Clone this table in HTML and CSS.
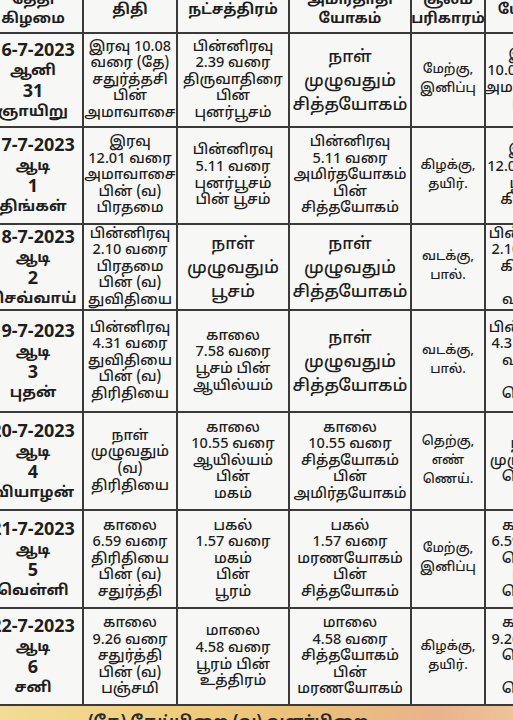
FILE: index.html
```html
<!DOCTYPE html>
<html lang="ta">
<head>
<meta charset="utf-8">
<link rel="stylesheet" href="styles.css">
</head>
<body>
<div class="page">
  <div class="grid">
    <div class="cell head">தேதி<br>கிழமை</div>
    <div class="cell head">திதி</div>
    <div class="cell head">நட்சத்திரம்</div>
    <div class="cell head">அமிர்தாதி<br>யோகம்</div>
    <div class="cell head">சூலம்<br>பரிகாரம்</div>
    <div class="cell head">யோகம்</div>

    <div class="cell date"><span class="d">16-7-2023</span><span>ஆனி</span><span class="d">31</span><span>ஞாயிறு</span></div>
    <div class="cell">இரவு 10.08<br>வரை (தே)<br>சதுர்த்தசி<br>பின்<br>அமாவாசை</div>
    <div class="cell">பின்னிரவு<br>2.39 வரை<br>திருவாதிரை<br>பின்<br>புனர்பூசம்</div>
    <div class="cell big">நாள்<br>முழுவதும்<br>சித்தயோகம்</div>
    <div class="cell small">மேற்கு,<br>இனிப்பு</div>
    <div class="cell">இரவு<br>10.08 வரை<br>அமாவாசை<br>பின்</div>

    <div class="cell date"><span class="d">17-7-2023</span><span>ஆடி</span><span class="d">1</span><span>திங்கள்</span></div>
    <div class="cell">இரவு<br>12.01 வரை<br>அமாவாசை<br>பின் (வ)<br>பிரதமை</div>
    <div class="cell">பின்னிரவு<br>5.11 வரை<br>புனர்பூசம்<br>பின் பூசம்</div>
    <div class="cell">பின்னிரவு<br>5.11 வரை<br>அமிர்தயோகம்<br>பின்<br>சித்தயோகம்</div>
    <div class="cell small">கிழக்கு,<br>தயிர்.</div>
    <div class="cell">இரவு<br>12.01 வரை<br>பூர்வ<br>கிழக்கு</div>

    <div class="cell date"><span class="d">18-7-2023</span><span>ஆடி</span><span class="d">2</span><span>செவ்வாய்</span></div>
    <div class="cell">பின்னிரவு<br>2.10 வரை<br>பிரதமை<br>பின் (வ)<br>துவிதியை</div>
    <div class="cell big">நாள்<br>முழுவதும்<br>பூசம்</div>
    <div class="cell big">நாள்<br>முழுவதும்<br>சித்தயோகம்</div>
    <div class="cell small">வடக்கு,<br>பால்.</div>
    <div class="cell">பின்னிரவு<br>2.10 வரை<br>கிழக்கு<br>&nbsp;<br>வடக்கு</div>

    <div class="cell date"><span class="d">19-7-2023</span><span>ஆடி</span><span class="d">3</span><span>புதன்</span></div>
    <div class="cell">பின்னிரவு<br>4.31 வரை<br>துவிதியை<br>பின் (வ)<br>திரிதியை</div>
    <div class="cell">காலை<br>7.58 வரை<br>பூசம் பின்<br>ஆயில்யம்</div>
    <div class="cell big">நாள்<br>முழுவதும்<br>சித்தயோகம்</div>
    <div class="cell small">வடக்கு,<br>பால்.</div>
    <div class="cell">பின்னிரவு<br>4.31 வரை<br>வடக்கு<br>&nbsp;<br>தெற்கு</div>

    <div class="cell date"><span class="d">20-7-2023</span><span>ஆடி</span><span class="d">4</span><span>வியாழன்</span></div>
    <div class="cell">நாள்<br>முழுவதும்<br>(வ)<br>திரிதியை</div>
    <div class="cell">காலை<br>10.55 வரை<br>ஆயில்யம்<br>பின்<br>மகம்</div>
    <div class="cell">காலை<br>10.55 வரை<br>சித்தயோகம்<br>பின்<br>அமிர்தயோகம்</div>
    <div class="cell small">தெற்கு,<br>எண்<br>ணெய்.</div>
    <div class="cell">நாள்<br>முழுவதும்<br>தெற்கு</div>

    <div class="cell date"><span class="d">21-7-2023</span><span>ஆடி</span><span class="d">5</span><span>வெள்ளி</span></div>
    <div class="cell">காலை<br>6.59 வரை<br>திரிதியை<br>பின் (வ)<br>சதுர்த்தி</div>
    <div class="cell">பகல்<br>1.57 வரை<br>மகம்<br>பின்<br>பூரம்</div>
    <div class="cell">பகல்<br>1.57 வரை<br>மரணயோகம்<br>பின்<br>சித்தயோகம்</div>
    <div class="cell small">மேற்கு,<br>இனிப்பு</div>
    <div class="cell">காலை<br>6.59 வரை<br>தெற்கு<br>பின்<br>தெற்கு</div>

    <div class="cell date"><span class="d">22-7-2023</span><span>ஆடி</span><span class="d">6</span><span>சனி</span></div>
    <div class="cell">காலை<br>9.26 வரை<br>சதுர்த்தி<br>பின் (வ)<br>பஞ்சமி</div>
    <div class="cell">மாலை<br>4.58 வரை<br>பூரம் பின்<br>உத்திரம்</div>
    <div class="cell">மாலை<br>4.58 வரை<br>சித்தயோகம்<br>பின்<br>மரணயோகம்</div>
    <div class="cell small">கிழக்கு,<br>தயிர்.</div>
    <div class="cell">காலை<br>9.26 வரை<br>தெற்கு<br>&nbsp;<br>தெற்கு</div>
  </div>
  <div class="strip"><span>(தே) தேய்பிறை (வ) வளர்பிறை</span></div>
</div>
</body>
</html>
```

FILE: styles.css
```css
html, body {
  margin: 0;
  padding: 0;
  width: 513px;
  height: 720px;
  overflow: hidden;
  background: #f6f6f4;
}
.page {
  width: 513px;
  height: 720px;
  overflow: hidden;
  font-family: "Noto Sans Tamil", "Noto Sans", "DejaVu Sans", sans-serif;
  color: #1e1e1e;
}
.grid {
  display: grid;
  grid-template-columns: 98px 92px 110px 120px 72px 86px;
  grid-template-rows: 44px 92px 95px 84px 100px 96px 96px 95px;
  gap: 2px;
  padding-bottom: 2px;
  background: #3a3a3a;
  width: 588px;
  margin-left: -16px;
  margin-top: -12px;
}
.cell {
  background: #f7f7f5;
  display: flex;
  align-items: center;
  justify-content: center;
  text-align: center;
  font-size: 14.5px;
  font-weight: 500;
  line-height: 16.6px;
  white-space: nowrap;
  overflow: hidden;
}
.head {
  font-weight: 700;
  font-size: 14.5px;
  line-height: 19px;
}
.date {
  flex-direction: column;
  font-weight: 700;
  font-size: 15px;
  line-height: 20px;
  padding-top: 3px;
}
.date span {
  display: block;
}
.date .d {
  font-size: 18px;
  line-height: 21px;
}
.big {
  font-size: 17px;
  line-height: 24px;
  padding-top: 4px;
}
.small {
  font-size: 13px;
  line-height: 19px;
}
.strip {
  height: 14px;
  overflow: hidden;
  background: linear-gradient(90deg, #f3dc98 0%, #efcd7c 35%, #ebc07a 60%, #e8b48c 85%, #eec39a 100%);
  padding-left: 88px;
}
.strip span {
  display: block;
  padding-top: 8px;
  font-size: 16px;
  line-height: 18px;
  font-weight: 700;
  color: #2a2a2a;
}
```
